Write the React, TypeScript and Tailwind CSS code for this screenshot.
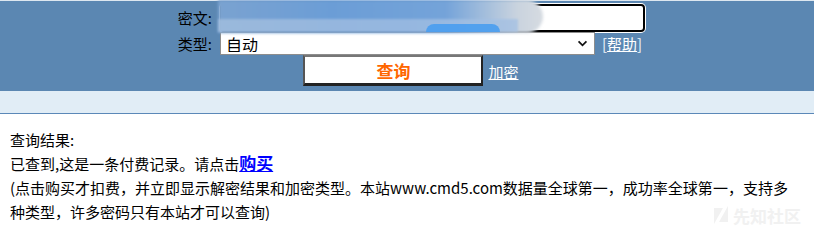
export default function App() {
  return (
    <div className="relative h-[232px] w-[814px] overflow-hidden bg-white font-['Noto_Sans_CJK_SC',sans-serif] text-[15px] text-black">
      <div className="h-px bg-[#dde7f0]" />

      <form className="bg-[#5b87b2] pb-[5px]">
        <div className="ml-[177px] grid w-[468px] grid-cols-[43px_425px] items-center">
          <label className="pt-[3px] pr-[8px] text-right leading-[28px]">密文:</label>
          <div className="pt-[3px]">
            <input className="block h-[28px] w-full rounded-[4px] border-2 border-black bg-white px-1 outline-none ring-1 ring-white" />
          </div>

          <label className="pr-[8px] text-right leading-[23px]">类型:</label>
          <div className="flex items-center">
            <div className="relative h-[23px] w-[375px]">
              <select className="block h-full w-full appearance-none border border-[#8d8d8d] bg-white pl-[5px] font-['Noto_Sans_CJK_SC',sans-serif] text-[16px] leading-none text-black outline-none">
                <option>自动</option>
              </select>
              <svg
                viewBox="0 0 12 8"
                className="pointer-events-none absolute right-[7px] top-[8px] h-[7px] w-[11px]"
              >
                <path d="M1.5 1.5 6 6l4.5-4.5" fill="none" stroke="#111" strokeWidth="2" />
              </svg>
            </div>
            <span className="ml-[7px] leading-[23px] text-[#eef4fa]">
              [<a href="#" className="text-white underline">帮助</a>]
            </span>
          </div>

          <div className="col-span-2 flex items-center justify-center">
            <button
              type="button"
              className="h-[31px] w-[180px] border-t-2 border-r-2 border-b-[3px] border-l-2 border-t-[#777] border-r-[#222] border-b-[#222] border-l-[#555] bg-white text-[17px] font-bold leading-none text-[#ff6600]"
            >
              查询
            </button>
            <a href="#" className="ml-[5px] mt-[4px] text-white underline">
              加密
            </a>
          </div>
        </div>
      </form>

      <div className="h-[23px] border-b border-[#5b88b8] bg-[#e1edf6]" />

      <div className="pt-[15px] pr-[10px] pl-[10px]">
        <div className="leading-[22px]">查询结果:</div>
        <div className="leading-[24px]">
          已查到,这是一条付费记录。请点击
          <a href="#" className="text-[17px] font-bold text-[#0000ff] underline">
            购买
          </a>
          <br />
          (点击购买才扣费，并立即显示解密结果和加密类型。本站www.cmd5.com数据量全球第一，成功率全球第一，支持多
          <br />
          种类型，许多密码只有本站才可以查询)
        </div>
      </div>

      {/* blurred redaction over the input */}
      <div className="pointer-events-none absolute top-0 left-[218px] h-[33px] w-[325px] rounded-r-[18px] bg-[linear-gradient(90deg,#7aa2d0_0%,#6b9dd6_35%,#74a3d9_70%,#c9d3de_92%,#d6dbe1_100%)] blur-[1.5px]" />
      <div className="pointer-events-none absolute top-[19px] left-[218px] h-[13px] w-[300px] bg-[linear-gradient(90deg,#a3bfdf,#9fbde2_60%,#a6c2e4)] opacity-80 blur-[1px]" />
      <div className="pointer-events-none absolute top-[24px] left-[426px] h-[8px] w-[74px] rounded-t-[10px] bg-[#4a9ef0] opacity-90 blur-[0.5px]" />

      {/* watermark */}
      <div className="pointer-events-none absolute right-[13px] bottom-[8px] flex items-center gap-[5px] text-[#f1f1f1]">
        <svg viewBox="0 0 14 18" className="h-[18px] w-[14px]">
          <path d="M0 18 L0 2 L9 2 Z M14 0 L14 16 L5 16 Z" fill="#f1f1f1" />
        </svg>
        <span className="text-[17px] font-bold leading-none">先知社区</span>
      </div>
    </div>
  );
}
